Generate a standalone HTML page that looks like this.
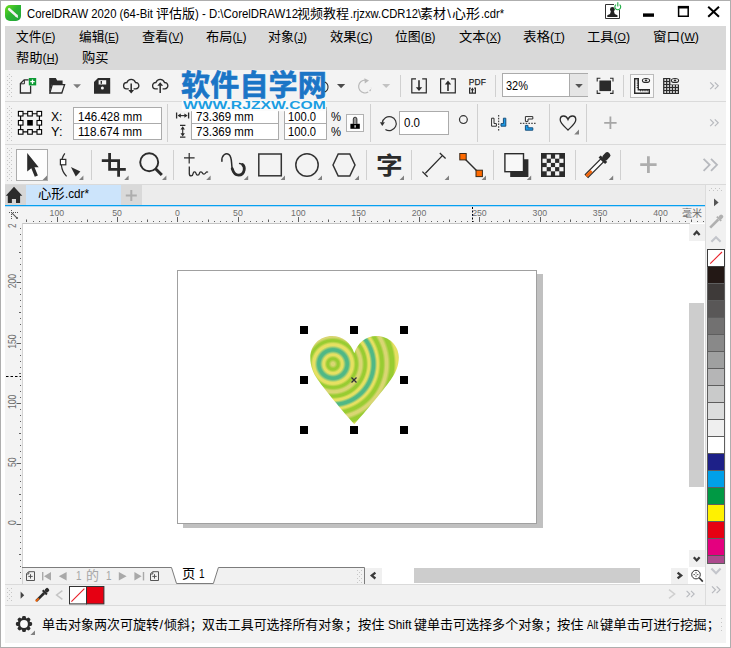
<!DOCTYPE html>
<html lang="zh-CN">
<head>
<meta charset="utf-8">
<title>CorelDRAW 2020</title>
<style>
html,body{margin:0;padding:0;}
body{width:731px;height:648px;overflow:hidden;background:#fff;position:relative;
 font-family:"Liberation Sans","Noto Sans CJK SC",sans-serif;font-size:12px;color:#000;}
.a{position:absolute;}
.t{position:absolute;white-space:pre;line-height:1;}
#win{left:0;top:0;width:729px;height:646px;border:1px solid #aeaeae;background:#fff;}
#menu{left:5px;top:26px;width:721px;height:44px;background:#d9d9d9;}
.mi{position:absolute;white-space:nowrap;font-size:13px;line-height:16px;height:16px;}
.mi u{text-decoration:underline;text-underline-offset:1px;}
.bar{left:5px;width:721px;background:#f3f3f3;}
.sep{position:absolute;width:1px;background:#d0d0d0;}
.inp{position:absolute;background:#fff;border:1px solid #ababab;box-sizing:border-box;}
.pt{position:absolute;white-space:nowrap;font-size:12.5px;line-height:14px;letter-spacing:-0.3px;}
#icons{left:0;top:0;width:731px;height:648px;pointer-events:none;}
.rl{font-size:9px;fill:#6e6e6e;font-family:"Liberation Sans",sans-serif;}
</style>
</head>
<body>
<div class="a" id="win"></div>

<div class="a" id="menu"></div>
<!-- standard toolbar -->
<div class="a bar" style="top:70px;height:31px;"></div>
<div class="a" style="left:5px;top:101px;width:721px;height:1px;background:#dadada;"></div>
<!-- property bar -->
<div class="a bar" style="top:102px;height:42px;"></div>
<div class="a" style="left:5px;top:144px;width:721px;height:1px;background:#dadada;"></div>
<!-- toolbox -->
<div class="a bar" style="top:145px;height:39px;"></div>
<div class="a" style="left:5px;top:184px;width:721px;height:1px;background:#dadada;"></div>
<!-- tab row -->
<div class="a" style="left:5px;top:185px;width:700px;height:20px;background:#ececec;"></div>
<div class="a" style="left:5px;top:185px;width:21px;height:20px;background:#d6d6d6;"></div>
<div class="a" style="left:26px;top:185px;width:95px;height:20px;background:#cce4fb;"></div>
<div class="a" style="left:121px;top:185px;width:21px;height:20px;background:#d9d9d9;"></div>
<div class="a" style="left:5px;top:205px;width:700px;height:2px;background:linear-gradient(#06a0f0 0,#06a0f0 1px,#b4dbf4 1px,#b4dbf4 2px);"></div>


<!-- palette panel -->
<div class="a" style="left:705px;top:185px;width:21px;height:420px;background:#f1f1f1;"></div>
<div class="a" style="left:705px;top:185px;width:1px;height:420px;background:#dcdcdc;"></div>
<!-- rulers -->
<div class="a" style="left:5px;top:207px;width:700px;height:16px;background:#f3f3f3;"></div>
<div class="a" style="left:5px;top:223px;width:17px;height:345px;background:#f3f3f3;"></div>
<!-- canvas -->
<div class="a" style="left:22px;top:223px;width:668px;height:345px;background:#fff;border-left:1px solid #d4d4d4;border-top:1px solid #c4c4c4;box-sizing:border-box;"></div>
<!-- page shadow + page -->
<div class="a" style="left:537px;top:274px;width:6px;height:254px;background:#c0c0c0;"></div>
<div class="a" style="left:183px;top:524px;width:360px;height:4px;background:#c0c0c0;"></div>
<div class="a" style="left:177px;top:270px;width:360px;height:254px;background:#fff;border:1px solid #a0a0a0;box-sizing:border-box;"></div>
<!-- v scrollbar -->
<div class="a" style="left:689px;top:224px;width:16px;height:344px;background:#fff;"></div>
<div class="a" style="left:689px;top:224px;width:16px;height:17px;background:#f0f0f0;"></div>
<div class="a" style="left:689px;top:550px;width:16px;height:17px;background:#f0f0f0;"></div>
<div class="a" style="left:689px;top:303px;width:15px;height:183.6px;background:#cdcdcd;"></div>
<!-- page nav row -->
<div class="a" style="left:5px;top:568px;width:700px;height:16px;background:#f1f1f1;"></div>
<div class="a" style="left:5px;top:568px;width:17px;height:16px;background:#f3f3f3;"></div>
<div class="a" style="left:22px;top:568px;width:1px;height:16px;background:#d2d2d2;"></div>

<div class="a" style="left:365px;top:568px;width:325px;height:16px;background:#fff;"></div>
<div class="a" style="left:365px;top:568px;width:17px;height:16px;background:#f0f0f0;"></div>
<div class="a" style="left:671px;top:568px;width:17px;height:16px;background:#f0f0f0;"></div>
<div class="a" style="left:414.3px;top:568.2px;width:225.5px;height:14.4px;background:#cdcdcd;"></div>
<div class="a" style="left:688px;top:568px;width:17px;height:16px;background:#fff;"></div>
<div class="a" style="left:5px;top:584px;width:700px;height:1px;background:#dadada;"></div>
<!-- color row -->
<div class="a" style="left:5px;top:585px;width:700px;height:20px;background:#f1f1f1;"></div>
<div class="a" style="left:5px;top:605px;width:721px;height:1px;background:#dadada;"></div>
<!-- status bar -->
<div class="a" style="left:5px;top:606px;width:721px;height:37px;background:#f3f3f3;"></div>

<!-- separators -->
<div class="sep" style="left:400px;top:75px;height:22px;"></div>
<div class="sep" style="left:495px;top:75px;height:22px;"></div>
<div class="sep" style="left:623px;top:75px;height:22px;"></div>
<div class="sep" style="left:167px;top:104px;height:38px;"></div>
<div class="sep" style="left:370px;top:104px;height:38px;"></div>
<div class="sep" style="left:477px;top:104px;height:38px;"></div>
<div class="sep" style="left:549px;top:104px;height:38px;"></div>
<div class="sep" style="left:586px;top:104px;height:38px;"></div>
<div class="sep" style="left:91px;top:150px;height:30px;"></div>
<div class="sep" style="left:173px;top:150px;height:30px;"></div>
<div class="sep" style="left:366px;top:150px;height:30px;"></div>
<div class="sep" style="left:411px;top:150px;height:30px;"></div>
<div class="sep" style="left:493px;top:150px;height:30px;"></div>
<div class="sep" style="left:575px;top:150px;height:30px;"></div>
<div class="sep" style="left:620px;top:150px;height:30px;"></div>
<!-- inputs -->
<div class="inp" style="left:502px;top:73px;width:86px;height:24px;"></div>
<div class="a" style="left:569px;top:74px;width:18px;height:22px;background:#e5e5e5;border-left:1px solid #ababab;"></div>
<div class="inp" style="left:73px;top:107px;width:89px;height:17px;"></div>
<div class="inp" style="left:73px;top:123px;width:89px;height:17px;"></div>
<div class="inp" style="left:191px;top:107px;width:88px;height:17px;"></div>
<div class="inp" style="left:191px;top:123px;width:88px;height:17px;"></div>
<div class="inp" style="left:284px;top:107px;width:43px;height:17px;"></div>
<div class="inp" style="left:284px;top:123px;width:43px;height:17px;"></div>
<div class="inp" style="left:399px;top:111px;width:50px;height:24px;"></div>
<!-- palette -->
<div class="a" style="left:707px;top:266px;width:18px;height:17px;background:#231815;border:1px solid #5e5e5e;border-bottom:none;box-sizing:border-box;"></div>
<div class="a" style="left:707px;top:283px;width:18px;height:17px;background:#3e3a39;border:1px solid #5e5e5e;border-bottom:none;box-sizing:border-box;"></div>
<div class="a" style="left:707px;top:300px;width:18px;height:17px;background:#595757;border:1px solid #5e5e5e;border-bottom:none;box-sizing:border-box;"></div>
<div class="a" style="left:707px;top:317px;width:18px;height:17px;background:#727171;border:1px solid #5e5e5e;border-bottom:none;box-sizing:border-box;"></div>
<div class="a" style="left:707px;top:334px;width:18px;height:17px;background:#898989;border:1px solid #5e5e5e;border-bottom:none;box-sizing:border-box;"></div>
<div class="a" style="left:707px;top:351px;width:18px;height:17px;background:#9fa0a0;border:1px solid #5e5e5e;border-bottom:none;box-sizing:border-box;"></div>
<div class="a" style="left:707px;top:368px;width:18px;height:17px;background:#b5b5b6;border:1px solid #5e5e5e;border-bottom:none;box-sizing:border-box;"></div>
<div class="a" style="left:707px;top:385px;width:18px;height:17px;background:#c9caca;border:1px solid #5e5e5e;border-bottom:none;box-sizing:border-box;"></div>
<div class="a" style="left:707px;top:402px;width:18px;height:17px;background:#dcdddd;border:1px solid #5e5e5e;border-bottom:none;box-sizing:border-box;"></div>
<div class="a" style="left:707px;top:419px;width:18px;height:17px;background:#efefef;border:1px solid #5e5e5e;border-bottom:none;box-sizing:border-box;"></div>
<div class="a" style="left:707px;top:436px;width:18px;height:17px;background:#ffffff;border:1px solid #5e5e5e;border-bottom:none;box-sizing:border-box;"></div>
<div class="a" style="left:707px;top:453px;width:18px;height:17px;background:#1d2088;border:1px solid #5e5e5e;border-bottom:none;box-sizing:border-box;"></div>
<div class="a" style="left:707px;top:470px;width:18px;height:17px;background:#00a0e9;border:1px solid #5e5e5e;border-bottom:none;box-sizing:border-box;"></div>
<div class="a" style="left:707px;top:487px;width:18px;height:17px;background:#009944;border:1px solid #5e5e5e;border-bottom:none;box-sizing:border-box;"></div>
<div class="a" style="left:707px;top:504px;width:18px;height:17px;background:#fff100;border:1px solid #5e5e5e;border-bottom:none;box-sizing:border-box;"></div>
<div class="a" style="left:707px;top:521px;width:18px;height:17px;background:#e60012;border:1px solid #5e5e5e;border-bottom:none;box-sizing:border-box;"></div>
<div class="a" style="left:707px;top:538px;width:18px;height:17px;background:#e4007f;border:1px solid #5e5e5e;border-bottom:none;box-sizing:border-box;"></div>
<div class="a" style="left:707px;top:555px;width:18px;height:9px;background:#ad4a8e;border:1px solid #5e5e5e;border-top:1px solid #555;box-sizing:border-box;"></div>
<div class="a" style="left:707px;top:249px;width:18px;height:18px;background:#fff;border:1px solid #3c3c3c;box-sizing:border-box;"></div>
<!-- tool text glyph -->
<div class="t" style="left:375.7px;top:151.6px;font-size:25px;font-weight:700;color:#2b2b2b;font-family:'Noto Sans CJK SC',sans-serif;transform:scale(1.07,0.945);transform-origin:0 0;">字</div>
<div class="t" style="left:468.8px;top:78.3px;font-size:8.4px;color:#1e1e1e;letter-spacing:0.15px;-webkit-text-stroke:0.25px #1e1e1e;">PDF</div>
<div class="t" style="left:682px;top:207.5px;font-size:10px;color:#6e6e6e;font-family:'Noto Sans CJK SC',sans-serif;">毫米</div>
<!-- watermark -->
<div class="a" style="left:181.5px;top:100.5px;width:144px;height:10px;background:#fbfbfb;box-shadow:0 0 1px #fbfbfb;"></div>
<div class="t" id="wm1" style="left:181px;top:69px;font-size:29px;letter-spacing:0.2px;font-weight:700;color:#1b75c6;-webkit-text-stroke:0.7px #1b75c6;font-family:'Noto Sans CJK SC',sans-serif;text-shadow:0 0 1px #fff,0 0 1px #fff,0 0 2px #fff;">软件自学网</div>
<!--MORE-->
<svg class="a" id="icons" width="731" height="648" viewBox="0 0 731 648">
<defs>
<linearGradient id="gApp" x1="0" y1="0" x2="1" y2="1"><stop offset="0" stop-color="#6ee01c"/><stop offset="0.45" stop-color="#2db52f"/><stop offset="1" stop-color="#1fa33c"/></linearGradient>
<radialGradient id="gHeart" gradientUnits="userSpaceOnUse" cx="333" cy="364" r="81">
<stop offset="0" stop-color="#d9d673"/>
<stop offset="0.02" stop-color="#d9d673"/>
<stop offset="0.055" stop-color="#98cc32"/>
<stop offset="0.075" stop-color="#98cc32"/>
<stop offset="0.105" stop-color="#e6e062"/>
<stop offset="0.125" stop-color="#e6e062"/>
<stop offset="0.16" stop-color="#4fb886"/>
<stop offset="0.19" stop-color="#4fb886"/>
<stop offset="0.225" stop-color="#e6e062"/>
<stop offset="0.25" stop-color="#e6e062"/>
<stop offset="0.28" stop-color="#98cc32"/>
<stop offset="0.30" stop-color="#98cc32"/>
<stop offset="0.33" stop-color="#d9d673"/>
<stop offset="0.355" stop-color="#d9d673"/>
<stop offset="0.385" stop-color="#98cc32"/>
<stop offset="0.41" stop-color="#98cc32"/>
<stop offset="0.435" stop-color="#e6e062"/>
<stop offset="0.455" stop-color="#e6e062"/>
<stop offset="0.485" stop-color="#4fb886"/>
<stop offset="0.515" stop-color="#4fb886"/>
<stop offset="0.545" stop-color="#e6e062"/>
<stop offset="0.56" stop-color="#e6e062"/>
<stop offset="0.59" stop-color="#98cc32"/>
<stop offset="0.62" stop-color="#98cc32"/>
<stop offset="0.65" stop-color="#d9d673"/>
<stop offset="0.675" stop-color="#d9d673"/>
<stop offset="0.71" stop-color="#98cc32"/>
<stop offset="0.75" stop-color="#98cc32"/>
<stop offset="0.78" stop-color="#e6e062"/>
<stop offset="0.81" stop-color="#e6e062"/>
<stop offset="0.85" stop-color="#4fb886"/>
<stop offset="0.9" stop-color="#4fb886"/>
<stop offset="1" stop-color="#e6e062"/>
</radialGradient>
</defs>

<!-- app icon -->
<path d="M10,5 H21 V16 A5,5 0 0 1 16,21 H10 A5,5 0 0 1 5,16 V10 A5,5 0 0 1 10,5 Z" fill="url(#gApp)"/>
<path d="M9.2,9.2 L16.4,15.6" stroke="#f2f2f2" stroke-width="2.6" stroke-linecap="round" fill="none"/>
<path d="M15.2,16.8 L18.2,17.9 L17.4,14.6 Z" fill="#f2f2f2"/>

<!-- user icon -->
<path d="M614,4.5 H605.5 V18.5 H619.5 V10" fill="none" stroke="#333" stroke-width="1"/>
<circle cx="612.4" cy="9.4" r="2.4" fill="#222"/>
<path d="M611,11 h2.8 l1,3 l2.7,1.2 v1.8 h-10.2 v-1.8 l2.7,-1.2 z" fill="#222"/>
<path d="M616,4.6 A2.9,2.9 0 1 0 619.6,4.6" fill="none" stroke="#1fae45" stroke-width="1.1"/>
<path d="M617.8,2.2 V6.6" stroke="#1fae45" stroke-width="1.1"/>
<!-- min max close -->
<rect x="643" y="13.4" width="11" height="3.4" fill="#000"/>
<path d="M678.6,7 H688.2 V16.3 H678.6 Z" fill="none" stroke="#000" stroke-width="1.5"/>
<rect x="677.9" y="5.9" width="11" height="2.6" fill="#000"/>
<path d="M708.2,6.8 L719,16.8 M719,6.8 L708.2,16.8" stroke="#000" stroke-width="2" fill="none"/>

<!-- HEART -->
<path id="heart" d="M354.3,353.2 C351,343 343,336 332,336 C319.5,336 310.3,345.5 310.3,357.5 C310.3,366 313,373 318,380 C322.5,386.5 338,405.8 354.3,424.3 C370.6,405.8 386.1,386.5 390.6,380 C395.6,373 398.8,366 398.8,357.5 C398.8,345.5 389,336 376.6,336 C365.6,336 357.6,343 354.3,353.2 Z" fill="url(#gHeart)"/>
<g fill="#000">
<rect x="300" y="326" width="8" height="8"/><rect x="350" y="326" width="8" height="8"/><rect x="400" y="326" width="8" height="8"/>
<rect x="300" y="376" width="8" height="8"/><rect x="400" y="376" width="8" height="8"/>
<rect x="300" y="426" width="8" height="8"/><rect x="350" y="426" width="8" height="8"/><rect x="400" y="426" width="8" height="8"/>
</g>
<path d="M351.5,377.5 L356.5,382.5 M356.5,377.5 L351.5,382.5" stroke="#2e2e38" stroke-width="1.3"/>
<clipPath id="rc2"><rect x="5" y="224" width="17" height="360"/></clipPath>
<clipPath id="rc"><rect x="5" y="206" width="700" height="17"/><rect x="5" y="224" width="17" height="360"/></clipPath>
<pattern id="grip" x="7" y="0" width="4" height="4" patternUnits="userSpaceOnUse"><rect x="0" y="0" width="1" height="1" fill="#c6c6c6"/><rect x="2" y="2" width="1" height="1" fill="#c6c6c6"/></pattern>
<!-- grippers -->
<rect x="7" y="73" width="5" height="25" fill="url(#grip)"/>
<rect x="7" y="105" width="5" height="37" fill="url(#grip)"/>
<rect x="7" y="148" width="5" height="33" fill="url(#grip)"/>
<rect x="7" y="587" width="5" height="14" fill="url(#grip)"/>
<rect x="357" y="570" width="6" height="13" fill="url(#grip)"/>
<rect x="708" y="187" width="15" height="5" fill="url(#grip)"/>
<rect x="720" y="616" width="3" height="18" fill="url(#grip)"/>

<!-- ===== standard toolbar ===== -->
<g fill="none" stroke="#2b2b2b" stroke-width="1.3">
<!-- new -->
<path d="M28.6,79.8 H24.2 L20.4,83.6 V93 H30.6 V85.8"/>
<path d="M24.4,80 V83.8 H20.6" stroke-width="1"/>
</g>
<rect x="28.8" y="78" width="7.4" height="7.4" fill="#0c9a33"/>
<path d="M32.5,79.5 V83.9 M30.3,81.7 H34.7" stroke="#fff" stroke-width="1.3"/>
<!-- open -->
<path d="M49.2,78 H55.8 L57.2,80.4 H62.6 V84.2 H52 L49.2,93.4 Z" fill="#2b2b2b"/>
<path d="M52.3,84.6 H64.6 L61.8,93 H49.8 Z" fill="#f3f3f3" stroke="#2b2b2b" stroke-width="1.3"/>
<path d="M73.2,84.3 H81 L77.1,88.3 Z" fill="#7c7c7c"/>
<!-- save -->
<path d="M98,78 H110.2 V93.8 H94 V82 Z" fill="#2b2b2b"/>
<rect x="98.6" y="80.2" width="7.6" height="4.3" fill="#f4f4f4"/>
<rect x="100.6" y="81" width="1.4" height="2.8" fill="#2b2b2b"/>
<circle cx="102.4" cy="88" r="1.5" fill="#f4f4f4"/>
<!-- cloud down -->
<g fill="none" stroke="#2b2b2b" stroke-width="1.3">
<path d="M128.8,88.8 H126.6 A3.15,3.15 0 0 1 126.9,82.5 A4.55,4.55 0 0 1 135.5,82.5 A3.15,3.15 0 0 1 135.9,88.8 H133.6"/>
<path d="M157.8,88.8 H155.6 A3.15,3.15 0 0 1 155.9,82.5 A4.55,4.55 0 0 1 164.5,82.5 A3.15,3.15 0 0 1 164.9,88.8 H162.6"/>
</g>
<path d="M131.2,83.6 V90.6" stroke="#2b2b2b" stroke-width="1.5"/>
<path d="M128.3,90 H134.1 L131.2,93.4 Z" fill="#2b2b2b"/>
<path d="M160.2,85.2 V93" stroke="#2b2b2b" stroke-width="1.5"/>
<path d="M157.3,85.8 H163.1 L160.2,82.2 Z" fill="#2b2b2b"/>
<!-- undo arc piece & arrows -->
<path d="M324.8,82 A5.5,5.5 0 0 1 324.8,92" fill="none" stroke="#2b2b2b" stroke-width="1.1"/>
<path d="M337,84 H345.2 L341.1,88.2 Z" fill="#4a4a4a"/>
<path d="M365.6,80.2 A6.4,6.4 0 1 0 371.3,87.8" fill="none" stroke="#b9b9b9" stroke-width="1.2" stroke-dasharray="23.5 1.6 1.8 1.6 1.8 20"/>
<path d="M364.4,78.2 L369,80.6 L364.8,83.6 Z" fill="#b9b9b9"/>
<path d="M382.2,84 H390.2 L386.2,88 Z" fill="#c2c2c2"/>
<!-- import / export -->
<g fill="none" stroke="#2b2b2b" stroke-width="1.2">
<path d="M416,78.9 H411.8 V92.8 H426.3 V78.9 H422.2"/>
<path d="M444.8,78.9 H440.6 V92.8 H455.3 V78.9 H451"/>
</g>
<path d="M419,80.2 V88.6" stroke="#2b2b2b" stroke-width="1.6"/>
<path d="M415.8,87.2 H422.2 L419,91 Z" fill="#2b2b2b"/>
<path d="M448,84 V91" stroke="#2b2b2b" stroke-width="1.6"/>
<path d="M444.8,84.6 H451.2 L448,80.4 Z" fill="#2b2b2b"/>
<!-- pdf small icon -->
<path d="M470.8,88.2 H469.6 V93.1 H475.4 V88.2 H474.2" fill="none" stroke="#2b2b2b" stroke-width="1.2"/>
<path d="M472.4,93 V89.6" stroke="#2b2b2b" stroke-width="1.2"/>
<path d="M470.6,90.2 H474.2 L472.4,87.6 Z" fill="#2b2b2b"/>
<!-- combo arrow -->
<path d="M575.2,84 H582.8 L579,88 Z" fill="#555"/>
<!-- fullscreen -->
<rect x="599.4" y="80.5" width="11.6" height="10.6" fill="#2b2b2b"/>
<path d="M597.2,81.4 V78.2 H600.4 M610,78.2 H613 V81.4 M613,90.2 V93.4 H610 M600.4,93.4 H597.2 V90.2" fill="none" stroke="#2b2b2b" stroke-width="1.1"/>
<!-- ruler btn -->
<rect x="630.5" y="74.5" width="23" height="23" fill="#f9f9f9" stroke="#bcbcbc" stroke-width="1"/>
<path d="M634.7,78.7 H638.3 V89.7 H649.3 V93.3 H634.7 Z" fill="#fdfdfd" stroke="#2b2b2b" stroke-width="1.4"/>
<path d="M636.7,80.9 H638 M636.7,83.1 H638 M636.7,85.3 H638 M636.7,87.5 H638 M640.6,90 V91.4 M642.8,90 V91.4 M645,90 V91.4 M647.2,90 V91.4" stroke="#2b2b2b" stroke-width="0.9"/>
<ellipse cx="646" cy="80.5" rx="3.6" ry="2" fill="none" stroke="#2b2b2b" stroke-width="1.1"/>
<ellipse cx="646" cy="80.5" rx="1.3" ry="1" fill="#2b2b2b"/>
<!-- grid icon -->
<path d="M663.1,78 H670.4 V84.4 H679 V94 H663.1 Z" fill="#2b2b2b"/>
<g fill="#f6f6f6"><rect x="664.35" y="79.15" width="1.7" height="1.7"/><rect x="667.25" y="79.15" width="1.7" height="1.7"/><rect x="664.35" y="82.15" width="1.7" height="1.7"/><rect x="667.25" y="82.15" width="1.7" height="1.7"/><rect x="664.35" y="85.15" width="1.7" height="1.7"/><rect x="667.25" y="85.15" width="1.7" height="1.7"/><rect x="670.15" y="85.15" width="1.7" height="1.7"/><rect x="673.10" y="85.15" width="1.7" height="1.7"/><rect x="676.05" y="85.15" width="1.7" height="1.7"/><rect x="664.35" y="88.15" width="1.7" height="1.7"/><rect x="667.25" y="88.15" width="1.7" height="1.7"/><rect x="670.15" y="88.15" width="1.7" height="1.7"/><rect x="673.10" y="88.15" width="1.7" height="1.7"/><rect x="676.05" y="88.15" width="1.7" height="1.7"/><rect x="664.35" y="91.15" width="1.7" height="1.7"/><rect x="667.25" y="91.15" width="1.7" height="1.7"/><rect x="670.15" y="91.15" width="1.7" height="1.7"/><rect x="673.10" y="91.15" width="1.7" height="1.7"/><rect x="676.05" y="91.15" width="1.7" height="1.7"/></g>
<ellipse cx="675" cy="80.5" rx="3.6" ry="2" fill="#f2f2f2" stroke="#2b2b2b" stroke-width="1.1"/>
<ellipse cx="675" cy="80.5" rx="1.3" ry="1" fill="#2b2b2b"/>
<!-- chevrons >> -->
<g fill="none" stroke="#b7b9be" stroke-width="1.2">
<path d="M710.2,82.4 L713.6,85.8 L710.2,89.2 M714.8,82.4 L718.2,85.8 L714.8,89.2"/>
<path d="M710.2,119.4 L713.6,122.8 L710.2,126.2 M714.8,119.4 L718.2,122.8 L714.8,126.2"/>
</g>
<path d="M703.6,158.8 L709.6,164.8 L703.6,170.8 M711,158.8 L717,164.8 L711,170.8" fill="none" stroke="#b7b9be" stroke-width="1.8"/>

<!-- ===== property bar ===== -->
<!-- origin icon -->
<path d="M20.6,113.7 H39.4 V131.9 H20.6 Z" fill="none" stroke="#000" stroke-width="1.1"/>
<g fill="#fff" stroke="#000" stroke-width="1.1">
<rect x="18.4" y="111.4" width="4.6" height="4.6"/><rect x="27.7" y="111.4" width="4.6" height="4.6"/><rect x="37" y="111.4" width="4.6" height="4.6"/>
<rect x="18.4" y="120.5" width="4.6" height="4.6"/><rect x="37" y="120.5" width="4.6" height="4.6"/>
<rect x="18.4" y="129.6" width="4.6" height="4.6"/><rect x="27.7" y="129.6" width="4.6" height="4.6"/><rect x="37" y="129.6" width="4.6" height="4.6"/>
</g>
<rect x="27.2" y="120" width="5.6" height="5.6" fill="#000"/>
<!-- width/height icons -->
<path d="M176.6,112.6 V118.6 M188.6,112.6 V118.6" stroke="#2b2b2b" stroke-width="1.3"/>
<path d="M178.6,115.6 H186.6" stroke="#2b2b2b" stroke-width="1.1"/>
<path d="M177.6,115.6 L180.8,113.4 V117.8 Z M187.6,115.6 L184.4,113.4 V117.8 Z" fill="#2b2b2b"/>
<path d="M180,125.4 H185.4 M180,137.2 H185.4" stroke="#2b2b2b" stroke-width="1.3"/>
<path d="M182.7,127.6 V135" stroke="#2b2b2b" stroke-width="1.1"/>
<path d="M182.7,126.2 L180.5,129.4 H184.9 Z M182.7,136.4 L180.5,133.2 H184.9 Z" fill="#2b2b2b"/>
<!-- lock -->
<rect x="346.5" y="114.5" width="17" height="17" fill="#fdfdfd" stroke="#b2b2b2"/>
<rect x="350.4" y="123.8" width="9.4" height="5" fill="#000"/>
<path d="M353.3,124 V119 A1.8,1.8 0 0 1 356.9,119 V124" fill="#9a9a9a" stroke="#222" stroke-width="0.9"/>
<rect x="354.5" y="125.2" width="1.2" height="2.4" fill="#fff"/>
<!-- rotate -->
<path d="M382.3,122.6 A7,7 0 1 1 385.4,129.5" fill="none" stroke="#333" stroke-width="1.2"/>
<path d="M379.9,122.2 L384.9,122.2 L382.3,126 Z" fill="#333"/>
<circle cx="463.4" cy="119.6" r="3.9" fill="none" stroke="#333" stroke-width="1.2"/>
<!-- mirror h -->
<path d="M491.6,118.2 H494 V123.6 H496.4 V126.2 H491.6 Z" fill="#fff" stroke="#2b2b2b" stroke-width="1"/>
<path d="M505.8,118.2 H503.4 V123.6 H501 V126.2 H505.8 Z" fill="#1c9be8" stroke="#1a4f7a" stroke-width="1"/>
<path d="M498.7,115 V131" stroke="#222" stroke-width="1" stroke-dasharray="1.6 1.2"/>
<!-- mirror v -->
<path d="M525.4,116.6 H532.8 V119 H528 V121.4 H525.4 Z" fill="#fff" stroke="#2b2b2b" stroke-width="1"/>
<path d="M525.4,130.2 H532.8 V127.8 H528 V125.4 H525.4 Z" fill="#1c9be8" stroke="#1a4f7a" stroke-width="1"/>
<path d="M520,123.3 H536" stroke="#222" stroke-width="1" stroke-dasharray="1.6 1.2"/>
<!-- heart btn -->
<path d="M568,119.4 C567,116.8 565.2,116 563.6,116 C561.4,116 560.2,117.8 560.2,119.8 C560.2,123.4 564.4,126.4 568,130 C571.6,126.4 575.8,123.4 575.8,119.8 C575.8,117.8 574.6,116 572.4,116 C570.8,116 569,116.8 568,119.4 Z" fill="none" stroke="#2b2b2b" stroke-width="1.3"/>
<path d="M579,129.6 V134.4 H574.2 Z" fill="#808080"/>
<path d="M604.2,122.8 H616.6 M610.4,116.6 V129" stroke="#a6a6a6" stroke-width="1.8"/>

<!-- ===== toolbox ===== -->
<rect x="16.5" y="149.5" width="31" height="31" fill="#fdfdfd" stroke="#ababab"/>
<path d="M27.2,153 V171.6 L31.3,168.3 L34.8,176.8 L37.9,175.5 L34.5,167.2 H38.7 Z" fill="#2b2b2b"/>
<g fill="#808080">
<path d="M47,175.6 V180 H42.6 Z"/><path d="M83.4,175.6 V180 H79 Z"/><path d="M128.6,175.6 V180 H124.2 Z"/><path d="M166.4,175.6 V180 H162 Z"/>
<path d="M210.6,175.6 V180 H206.2 Z"/><path d="M248.2,175.6 V180 H243.8 Z"/><path d="M285,175.6 V180 H280.6 Z"/><path d="M322,175.6 V180 H317.6 Z"/>
<path d="M359,175.6 V180 H354.6 Z"/><path d="M404,175.6 V180 H399.6 Z"/><path d="M449,175.6 V180 H444.6 Z"/><path d="M486,175.6 V180 H481.6 Z"/>
<path d="M531.2,175.6 V180 H526.8 Z"/><path d="M613.2,175.6 V180 H608.8 Z"/>
<path d="M35,630.4 V635 H30.4 Z"/>
</g>
<!-- shape tool -->
<path d="M64.8,153.4 C59.4,161 60.6,170 66.6,176.4" fill="none" stroke="#2b2b2b" stroke-width="1.2"/>
<rect x="60.4" y="159.4" width="5.4" height="5.4" fill="#fff" stroke="#2b2b2b" stroke-width="1.2"/>
<path d="M70.9,166.9 L80.4,171.5 L75.8,176.4 Z" fill="#2b2b2b"/>
<!-- crop -->
<path d="M109.6,153 V169.4 H125.8 M101.8,160.6 H118.6 V176.8" fill="none" stroke="#2b2b2b" stroke-width="2.8"/>
<path d="M111,163 H117.2 V168" fill="none" stroke="#f1f1f1" stroke-width="0"/>
<!-- zoom -->
<circle cx="149.2" cy="162.3" r="9" fill="none" stroke="#2b2b2b" stroke-width="1.9"/>
<path d="M155.6,168.8 L161.8,175" stroke="#2b2b2b" stroke-width="3"/>
<!-- freehand -->
<path d="M184,157.9 H194.6 M189.2,153 V163.4" stroke="#2b2b2b" stroke-width="1.2"/>
<path d="M189.3,166.4 V173.6 C189.5,176.8 192.7,176.4 193.1,173.6 C193.4,171.4 195.6,171.4 196,173.4 C196.5,175.8 199,175.8 199.4,173.4 C199.8,171.4 201.8,171.4 202.4,173 C203,174.6 205,174.2 205.8,172.8 C206.4,171.8 207.2,171.6 208,172.4" fill="none" stroke="#2b2b2b" stroke-width="1.3"/>
<!-- artistic media -->
<path d="M221.9,161.2 C221.4,155 226,152.4 229,154.6 C233,157.6 230.4,166 233.2,171.6 C236,177 243,176.2 244.2,170 C244.8,166.4 243,163.8 239.6,163.4" fill="none" stroke="#2b2b2b" stroke-width="1.5" stroke-linecap="round"/>
<path d="M232.2,168.6 C233.4,172.6 235.4,175.2 238.6,175.2 C241.6,175.2 243.6,173 244.2,170 C244.6,167.8 244,165.8 242.6,164.6" fill="none" stroke="#2b2b2b" stroke-width="2.8" stroke-linecap="round"/>
<!-- rect ellipse polygon -->
<rect x="258.8" y="154" width="22.5" height="21.8" fill="none" stroke="#333" stroke-width="1.5"/>
<circle cx="307" cy="165" r="11.2" fill="none" stroke="#333" stroke-width="1.5"/>
<path d="M333,165 L338.2,154 H349.8 L355,165 L349.8,176 H338.2 Z" fill="none" stroke="#333" stroke-width="1.5"/>
<!-- dimension -->
<path d="M425.4,173.2 L442.4,155.6 M422.4,171.6 L427.6,176.8 M439.8,153 L445.6,158.4" fill="none" stroke="#2b2b2b" stroke-width="1.3"/>
<!-- connector -->
<path d="M463,157 L479,173" stroke="#2b2b2b" stroke-width="1.5"/>
<rect x="459.8" y="153.5" width="6.4" height="6.4" fill="#ff6a00" stroke="#3a2a1a" stroke-width="1"/>
<rect x="476" y="170.2" width="6.4" height="6.4" fill="#ff6a00" stroke="#3a2a1a" stroke-width="1"/>
<!-- drop shadow -->
<path d="M510.2,172 H524 V159.2 H528.4 V177 H510.2 Z" fill="#2b2b2b"/>
<rect x="504.9" y="153.7" width="18.6" height="18" fill="#f8f8f8" stroke="#2b2b2b" stroke-width="1.4"/>
<!-- transparency -->
<rect x="541" y="153" width="24" height="24" fill="#2b2b2b"/>
<g fill="#f4f4f4">
<rect x="546.7" y="154.5" width="4.2" height="4.2"/><rect x="555.1" y="154.5" width="4.2" height="4.2"/>
<rect x="542.5" y="158.7" width="4.2" height="4.2"/><rect x="550.9" y="158.7" width="4.2" height="4.2"/><rect x="559.3" y="158.7" width="4.2" height="4.2"/>
<rect x="546.7" y="162.9" width="4.2" height="4.2"/><rect x="555.1" y="162.9" width="4.2" height="4.2"/>
<rect x="542.5" y="167.1" width="4.2" height="4.2"/><rect x="550.9" y="167.1" width="4.2" height="4.2"/><rect x="559.3" y="167.1" width="4.2" height="4.2"/>
<rect x="546.7" y="171.3" width="4.2" height="4.2"/><rect x="555.1" y="171.3" width="4.2" height="4.2"/>
</g>
<!-- eyedropper big -->
<g transform="translate(598,164.6) rotate(45)">
<rect x="-2" y="-6" width="4" height="22" fill="#fff" stroke="#2b2b2b" stroke-width="1.2"/>
<rect x="-1.4" y="9" width="2.8" height="7.6" fill="#f0640a"/>
<rect x="-4.6" y="-8.4" width="9.2" height="3" fill="#2b2b2b"/>
<rect x="-3" y="-16" width="6" height="8.4" rx="2.4" fill="#2b2b2b"/>
</g>
<path d="M640.2,164.6 H656.6 M648.4,156.2 V173" stroke="#adadad" stroke-width="2.8"/>

<!-- tab row -->
<path d="M14,186.7 L22.3,195.8 H20.1 V203 H16 V199 H11.9 V203 H7.8 V195.8 H5.8 Z" fill="#2b2b2b"/>
<path d="M125.8,195.4 H136.8 M131.3,189.9 V200.9" stroke="#adadad" stroke-width="2"/>
<!-- ruler corner -->
<path d="M9,212.5 H19 M11.5,210 V220" stroke="#555" stroke-width="1" stroke-dasharray="1 1"/>
<path d="M11.8,212.8 L16.8,217.8" stroke="#555" stroke-width="1.1"/>
<circle cx="17" cy="218" r="1.1" fill="#555"/>
<!-- ruler markers -->
<path d="M472.5,207 V222" stroke="#000" stroke-width="1" stroke-dasharray="2 1.5"/>
<path d="M6,376.5 H21" stroke="#000" stroke-width="1" stroke-dasharray="2.5 2"/>

<!-- scrollbar arrows -->
<path d="M693.8,235 L696.7,231.8 L699.6,235" fill="none" stroke="#3a3a3a" stroke-width="2.3"/>
<path d="M693.8,557.2 L696.7,560.4 L699.6,557.2" fill="none" stroke="#3a3a3a" stroke-width="2.3"/>
<path d="M375.4,572.7 L371.8,575.6 L375.4,578.5" fill="none" stroke="#3a3a3a" stroke-width="2.3"/>
<path d="M677.6,572.6 L681.2,575.5 L677.6,578.4" fill="none" stroke="#3a3a3a" stroke-width="2.3"/>
<!-- navigator -->
<circle cx="696" cy="574.6" r="4.3" fill="none" stroke="#333" stroke-width="1"/>
<path d="M699.2,577.8 L702.8,581.6" stroke="#333" stroke-width="1.6"/>
<path d="M696,572 V577.2 M693.4,574.6 H698.6" stroke="#333" stroke-width="0.8" stroke-dasharray="1.6 1.8"/>

<!-- palette panel icons -->
<path d="M710.2,263.6 L722,252" stroke="#e8212a" stroke-width="1.1"/>
<path d="M714,198.6 L718.6,202.4 L714,206.2 Z" fill="#555"/>
<g transform="translate(716.2,221.6) rotate(45)" fill="#b0b0b0">
<rect x="-1.3" y="-3" width="2.6" height="11.5"/>
<rect x="-3" y="-5" width="6" height="2"/>
<rect x="-2" y="-9" width="4" height="4.4" rx="1.6"/>
</g>
<path d="M711.4,241.8 L716,237.2 L720.6,241.8" fill="none" stroke="#c3c5cb" stroke-width="2.1"/>
<path d="M711.4,568.6 L716,573.2 L720.6,568.6" fill="none" stroke="#c3c5cb" stroke-width="2.1"/>
<path d="M712,586.4 L715.4,589.8 L712,593.2 M716.6,586.4 L720,589.8 L716.6,593.2" fill="none" stroke="#b7b9be" stroke-width="1.2"/>

<!-- page nav -->
<g fill="none" stroke="#555" stroke-width="1">
<path d="M28.6,571.7 H34.5 V580.5 H26.5 V573.8 Z M26.7,574 H28.8 V571.9"/>
<path d="M30.5,574.2 V578.6 M28.3,576.4 H32.7"/>
<path d="M152.6,571.7 H158.5 V580.5 H150.5 V573.8 Z M150.7,574 H152.8 V571.9"/>
<path d="M154.5,574.2 V578.6 M152.3,576.4 H156.7"/>
</g>
<g fill="#a9a9a9">
<rect x="42" y="572" width="1.4" height="8.4"/><path d="M51,572 V580.4 L44,576.2 Z"/>
<path d="M66.6,572 V580.4 L58.8,576.2 Z"/>
<path d="M118.8,572 V580.4 L126.6,576.2 Z"/>
<path d="M134.4,572 V580.4 L141.6,576.2 Z"/><rect x="142.8" y="572" width="1.4" height="8.4"/>
</g>
<!-- page tab -->
<path d="M171.5,567.5 L176.5,583.5 H213.4 L218.4,567.5 Z" fill="#fff"/>
<path d="M22,567.5 H171.5 L176.5,583.5 H213.4 L218.4,567.5 H364.5 V584" fill="none" stroke="#7c7c7c" stroke-width="1"/>

<!-- color row -->
<path d="M20.6,591.6 L24.2,595.2 L20.6,598.8 Z" fill="#444"/>
<g transform="translate(42.4,594.8) rotate(45)">
<rect x="-1.3" y="-2.6" width="2.6" height="11.2" fill="#2b2b2b"/>
<rect x="-0.9" y="5" width="1.8" height="4.4" fill="#f0640a"/>
<rect x="-3" y="-4.4" width="6" height="2" fill="#2b2b2b"/>
<rect x="-2" y="-8.6" width="4" height="4.4" rx="1.6" fill="#2b2b2b"/>
</g>
<path d="M62.4,590.6 L56.6,595 L62.4,599.4" fill="none" stroke="#c4c4c4" stroke-width="1.5"/>
<rect x="69.5" y="586.5" width="17" height="17.4" fill="#fff" stroke="#333"/>
<rect x="86.5" y="586.5" width="17.4" height="17.4" fill="#e60012" stroke="#333"/>
<path d="M71.4,601.6 L84.4,588.6" stroke="#e8212a" stroke-width="1.1"/>
<path d="M669,589.6 L674.6,594 L669,598.4" fill="none" stroke="#cfcfcf" stroke-width="1.5"/>
<path d="M686.6,590.8 L689.8,594 L686.6,597.2 M691,590.8 L694.2,594 L691,597.2" fill="none" stroke="#b7b9be" stroke-width="1.1"/>

<!-- gear -->
<g transform="translate(24,624)">
<g fill="#2b2b2b">
<circle r="6.2"/>
<rect x="-1.9" y="-8.1" width="3.8" height="16.2" rx="1.4"/>
<rect x="-1.9" y="-8.1" width="3.8" height="16.2" rx="1.4" transform="rotate(45)"/>
<rect x="-1.9" y="-8.1" width="3.8" height="16.2" rx="1.4" transform="rotate(90)"/>
<rect x="-1.9" y="-8.1" width="3.8" height="16.2" rx="1.4" transform="rotate(135)"/>
</g>
<circle r="3.9" fill="#fafafa"/>
</g>
<g id="rulers">
<path d="M26,219.5v2.5h1v-2.5zM33,221v1h1v-1zM39,221v1h1v-1zM45,221v1h1v-1zM51,221v1h1v-1zM57,217v5h1v-5zM63,221v1h1v-1zM69,221v1h1v-1zM75,221v1h1v-1zM81,221v1h1v-1zM87,219.5v2.5h1v-2.5zM93,221v1h1v-1zM99,221v1h1v-1zM105,221v1h1v-1zM111,221v1h1v-1zM117,217v5h1v-5zM123,221v1h1v-1zM129,221v1h1v-1zM135,221v1h1v-1zM141,221v1h1v-1zM147,219.5v2.5h1v-2.5zM153,221v1h1v-1zM159,221v1h1v-1zM165,221v1h1v-1zM171,221v1h1v-1zM177,217v5h1v-5zM183,221v1h1v-1zM189,221v1h1v-1zM196,221v1h1v-1zM202,221v1h1v-1zM208,219.5v2.5h1v-2.5zM214,221v1h1v-1zM220,221v1h1v-1zM226,221v1h1v-1zM232,221v1h1v-1zM238,217v5h1v-5zM244,221v1h1v-1zM250,221v1h1v-1zM256,221v1h1v-1zM262,221v1h1v-1zM268,219.5v2.5h1v-2.5zM274,221v1h1v-1zM280,221v1h1v-1zM286,221v1h1v-1zM292,221v1h1v-1zM298,217v5h1v-5zM304,221v1h1v-1zM310,221v1h1v-1zM316,221v1h1v-1zM322,221v1h1v-1zM328,219.5v2.5h1v-2.5zM334,221v1h1v-1zM340,221v1h1v-1zM346,221v1h1v-1zM353,221v1h1v-1zM359,217v5h1v-5zM365,221v1h1v-1zM371,221v1h1v-1zM377,221v1h1v-1zM383,221v1h1v-1zM389,219.5v2.5h1v-2.5zM395,221v1h1v-1zM401,221v1h1v-1zM407,221v1h1v-1zM413,221v1h1v-1zM419,217v5h1v-5zM425,221v1h1v-1zM431,221v1h1v-1zM437,221v1h1v-1zM443,221v1h1v-1zM449,219.5v2.5h1v-2.5zM455,221v1h1v-1zM461,221v1h1v-1zM467,221v1h1v-1zM473,221v1h1v-1zM479,217v5h1v-5zM485,221v1h1v-1zM491,221v1h1v-1zM497,221v1h1v-1zM503,221v1h1v-1zM509,219.5v2.5h1v-2.5zM516,221v1h1v-1zM522,221v1h1v-1zM528,221v1h1v-1zM534,221v1h1v-1zM540,217v5h1v-5zM546,221v1h1v-1zM552,221v1h1v-1zM558,221v1h1v-1zM564,221v1h1v-1zM570,219.5v2.5h1v-2.5zM576,221v1h1v-1zM582,221v1h1v-1zM588,221v1h1v-1zM594,221v1h1v-1zM600,217v5h1v-5zM606,221v1h1v-1zM612,221v1h1v-1zM618,221v1h1v-1zM624,221v1h1v-1zM630,219.5v2.5h1v-2.5zM636,221v1h1v-1zM642,221v1h1v-1zM648,221v1h1v-1zM654,221v1h1v-1zM660,217v5h1v-5zM666,221v1h1v-1zM672,221v1h1v-1zM679,221v1h1v-1zM685,221v1h1v-1zM691,219.5v2.5h1v-2.5zM697,221v1h1v-1zM703,221v1h1v-1z" fill="#606060"/>
<text class="rl" transform="translate(56.8,216) scale(0.97,1.08)" text-anchor="middle">100</text>
<text class="rl" transform="translate(117.1,216) scale(0.97,1.08)" text-anchor="middle">50</text>
<text class="rl" transform="translate(177.5,216) scale(0.97,1.08)" text-anchor="middle">0</text>
<text class="rl" transform="translate(237.9,216) scale(0.97,1.08)" text-anchor="middle">50</text>
<text class="rl" transform="translate(298.3,216) scale(0.97,1.08)" text-anchor="middle">100</text>
<text class="rl" transform="translate(358.6,216) scale(0.97,1.08)" text-anchor="middle">150</text>
<text class="rl" transform="translate(419.0,216) scale(0.97,1.08)" text-anchor="middle">200</text>
<text class="rl" transform="translate(479.4,216) scale(0.97,1.08)" text-anchor="middle">250</text>
<text class="rl" transform="translate(539.8,216) scale(0.97,1.08)" text-anchor="middle">300</text>
<text class="rl" transform="translate(600.1,216) scale(0.97,1.08)" text-anchor="middle">350</text>
<text class="rl" transform="translate(660.5,216) scale(0.97,1.08)" text-anchor="middle">400</text>
<g clip-path="url(#rc2)">
<path d="M20,578h1v1h-1zM20,572h1v1h-1zM20,566h1v1h-1zM20,560h1v1h-1zM19,554h2v1h-2zM20,548h1v1h-1zM20,542h1v1h-1zM20,536h1v1h-1zM20,530h1v1h-1zM16.5,524h4.5v1h-4.5zM20,518h1v1h-1zM20,512h1v1h-1zM20,506h1v1h-1zM20,500h1v1h-1zM19,494h2v1h-2zM20,487h1v1h-1zM20,481h1v1h-1zM20,475h1v1h-1zM20,469h1v1h-1zM16.5,463h4.5v1h-4.5zM20,457h1v1h-1zM20,451h1v1h-1zM20,445h1v1h-1zM20,439h1v1h-1zM19,433h2v1h-2zM20,427h1v1h-1zM20,421h1v1h-1zM20,415h1v1h-1zM20,409h1v1h-1zM16.5,403h4.5v1h-4.5zM20,397h1v1h-1zM20,391h1v1h-1zM20,385h1v1h-1zM20,379h1v1h-1zM19,373h2v1h-2zM20,367h1v1h-1zM20,361h1v1h-1zM20,355h1v1h-1zM20,349h1v1h-1zM16.5,343h4.5v1h-4.5zM20,337h1v1h-1zM20,331h1v1h-1zM20,324h1v1h-1zM20,318h1v1h-1zM19,312h2v1h-2zM20,306h1v1h-1zM20,300h1v1h-1zM20,294h1v1h-1zM20,288h1v1h-1zM16.5,282h4.5v1h-4.5zM20,276h1v1h-1zM20,270h1v1h-1zM20,264h1v1h-1zM20,258h1v1h-1zM19,252h2v1h-2zM20,246h1v1h-1zM20,240h1v1h-1zM20,234h1v1h-1zM20,228h1v1h-1z" fill="#606060"/>
<text class="rl" transform="translate(16.3,522.7) rotate(-90) scale(0.95,1.15)" text-anchor="middle">0</text>
<text class="rl" transform="translate(16.3,462.3) rotate(-90) scale(0.95,1.15)" text-anchor="middle">50</text>
<text class="rl" transform="translate(16.3,402.0) rotate(-90) scale(0.95,1.15)" text-anchor="middle">100</text>
<text class="rl" transform="translate(16.3,341.6) rotate(-90) scale(0.95,1.15)" text-anchor="middle">150</text>
<text class="rl" transform="translate(16.3,281.2) rotate(-90) scale(0.95,1.15)" text-anchor="middle">200</text>
<text class="rl" transform="translate(16.3,220.8) rotate(-90) scale(0.95,1.15)" text-anchor="middle">250</text>
</g>
</g>

</svg>

<div class="t" style="left:27px;top:7px;font-size:13px;transform:scaleX(0.8695);transform-origin:0 0;">CorelDRAW 2020 (64-Bit </div>
<div class="t" style="left:155.5px;top:7px;font-size:13px;transform:scaleX(0.9996);transform-origin:0 0;">评估版</div>
<div class="t" style="left:194.5px;top:7px;font-size:13px;transform:scaleX(0.8783);transform-origin:0 0;">) - D:\CorelDRAW12</div>
<div class="t" style="left:297px;top:7px;font-size:13px;transform:scaleX(0.9997);transform-origin:0 0;">视频教程</div>
<div class="t" style="left:349.5px;top:7px;font-size:13px;transform:scaleX(0.8621);transform-origin:0 0;">.rjzxw.CDR12\</div>
<div class="t" style="left:420px;top:7px;font-size:13px;transform:scaleX(0.9994);transform-origin:0 0;">素材</div>
<div class="t" style="left:447.2px;top:7px;font-size:13px;">\</div>
<div class="t" style="left:452px;top:7px;font-size:13px;transform:scaleX(1.0763);transform-origin:0 0;">心形</div>
<div class="t" style="left:480.5px;top:7px;font-size:13px;transform:scaleX(0.8603);transform-origin:0 0;">.cdr*</div>
<div class="t" style="left:16px;top:30px;font-size:13px;transform:scaleX(0.9768);transform-origin:0 0;">文件<span style="font-size:12px">(</span><u style="font-size:10.5px">F</u><span style="font-size:12px">)</span></div>
<div class="t" style="left:79px;top:30px;font-size:13px;transform:scaleX(0.9749);transform-origin:0 0;">编辑<span style="font-size:12px">(</span><u style="font-size:10.5px">E</u><span style="font-size:12px">)</span></div>
<div class="t" style="left:141.5px;top:30px;font-size:13px;transform:scaleX(1.0114);transform-origin:0 0;">查看<span style="font-size:12px">(</span><u style="font-size:10.5px">V</u><span style="font-size:12px">)</span></div>
<div class="t" style="left:205.5px;top:30px;font-size:13px;transform:scaleX(1.0161);transform-origin:0 0;">布局<span style="font-size:12px">(</span><u style="font-size:10.5px">L</u><span style="font-size:12px">)</span></div>
<div class="t" style="left:268px;top:30px;font-size:13px;transform:scaleX(0.9932);transform-origin:0 0;">对象<span style="font-size:12px">(</span><u style="font-size:10.5px">J</u><span style="font-size:12px">)</span></div>
<div class="t" style="left:329.5px;top:30px;font-size:13px;transform:scaleX(1.0214);transform-origin:0 0;">效果<span style="font-size:12px">(</span><u style="font-size:10.5px">C</u><span style="font-size:12px">)</span></div>
<div class="t" style="left:395px;top:30px;font-size:13px;transform:scaleX(0.9871);transform-origin:0 0;">位图<span style="font-size:12px">(</span><u style="font-size:10.5px">B</u><span style="font-size:12px">)</span></div>
<div class="t" style="left:458.5px;top:30px;font-size:13px;transform:scaleX(1.0236);transform-origin:0 0;">文本<span style="font-size:12px">(</span><u style="font-size:10.5px">X</u><span style="font-size:12px">)</span></div>
<div class="t" style="left:522.5px;top:30px;font-size:13px;transform:scaleX(1.0386);transform-origin:0 0;">表格<span style="font-size:12px">(</span><u style="font-size:10.5px">T</u><span style="font-size:12px">)</span></div>
<div class="t" style="left:587px;top:30px;font-size:13px;transform:scaleX(1.0193);transform-origin:0 0;">工具<span style="font-size:12px">(</span><u style="font-size:10.5px">O</u><span style="font-size:12px">)</span></div>
<div class="t" style="left:652.5px;top:30px;font-size:13px;transform:scaleX(1.0469);transform-origin:0 0;">窗口<span style="font-size:12px">(</span><u style="font-size:10.5px">W</u><span style="font-size:12px">)</span></div>
<div class="t" style="left:16px;top:51px;font-size:13px;transform:scaleX(1.0214);transform-origin:0 0;">帮助<span style="font-size:12px">(</span><u style="font-size:10.5px">H</u><span style="font-size:12px">)</span></div>
<div class="t" style="left:82px;top:51px;font-size:13px;transform:scaleX(1.0186);transform-origin:0 0;">购买</div>
<div class="t" style="left:506px;top:79px;font-size:13px;transform:scaleX(0.8451);transform-origin:0 0;">32%</div>
<div class="t" style="left:51px;top:109.5px;font-size:13px;transform:scaleX(0.9352);transform-origin:0 0;">X:</div>
<div class="t" style="left:51px;top:125px;font-size:13px;transform:scaleX(0.9933);transform-origin:0 0;">Y:</div>
<div class="t" style="left:77.5px;top:109.5px;font-size:13px;transform:scaleX(0.8856);transform-origin:0 0;">146.428 mm</div>
<div class="t" style="left:77.5px;top:125px;font-size:13px;transform:scaleX(0.8977);transform-origin:0 0;">118.674 mm</div>
<div class="t" style="left:195.5px;top:109.5px;font-size:13px;transform:scaleX(0.8840);transform-origin:0 0;">73.369 mm</div>
<div class="t" style="left:195.5px;top:125px;font-size:13px;transform:scaleX(0.8840);transform-origin:0 0;">73.369 mm</div>
<div class="t" style="left:288px;top:109.5px;font-size:13px;transform:scaleX(0.8603);transform-origin:0 0;">100.0</div>
<div class="t" style="left:288px;top:125px;font-size:13px;transform:scaleX(0.8603);transform-origin:0 0;">100.0</div>
<div class="t" style="left:330.5px;top:109.5px;font-size:13px;transform:scaleX(0.8649);transform-origin:0 0;">%</div>
<div class="t" style="left:330.5px;top:125px;font-size:13px;transform:scaleX(0.8649);transform-origin:0 0;">%</div>
<div class="t" style="left:404px;top:116px;font-size:13px;transform:scaleX(0.8850);transform-origin:0 0;">0.0</div>
<div class="t" style="left:37.6px;top:187.2px;font-size:13px;transform:scaleX(1.0263);transform-origin:0 0;">心形</div>
<div class="t" style="left:64.8px;top:187.2px;font-size:13px;transform:scaleX(0.8977);transform-origin:0 0;">.cdr*</div>
<div class="t" style="left:75.5px;top:569.2px;font-size:13px;color:#a6a6a6;transform:scaleX(0.7603);transform-origin:0 0;">1</div>
<div class="t" style="left:86px;top:569.2px;font-size:13px;color:#a6a6a6;transform:scaleX(0.9988);transform-origin:0 0;">的</div>
<div class="t" style="left:105.5px;top:569.2px;font-size:13px;color:#a6a6a6;transform:scaleX(0.7603);transform-origin:0 0;">1</div>
<div class="t" style="left:182.4px;top:566.7px;font-size:13px;transform:scaleX(1.0295);transform-origin:0 0;">页</div>
<div class="t" style="left:199px;top:566.7px;font-size:13px;transform:scaleX(0.7741);transform-origin:0 0;">1</div>
<div class="t" style="left:41.5px;top:618px;font-size:13px;transform:scaleX(0.9999);transform-origin:0 0;">单击对象两次可旋转</div>
<div class="t" style="left:159.4px;top:618px;font-size:13px;">/</div>
<div class="t" style="left:164px;top:618px;font-size:13px;transform:scaleX(0.9917);transform-origin:0 0;">倾斜</div>
<div class="t" style="left:190px;top:618px;font-size:13px;transform:scaleX(0.9220);transform-origin:0 0;">；</div>
<div class="t" style="left:201.7px;top:618px;font-size:13px;transform:scaleX(0.9936);transform-origin:0 0;">双击工具可选择所有对象</div>
<div class="t" style="left:344.6px;top:618px;font-size:13px;transform:scaleX(0.9911);transform-origin:0 0;">；</div>
<div class="t" style="left:358px;top:618px;font-size:13px;transform:scaleX(1.0148);transform-origin:0 0;">按住</div>
<div class="t" style="left:388px;top:618px;font-size:13px;transform:scaleX(0.9033);transform-origin:0 0;">Shift</div>
<div class="t" style="left:414.2px;top:618px;font-size:13px;transform:scaleX(1.0014);transform-origin:0 0;">键单击可选择多个对象</div>
<div class="t" style="left:544.8px;top:618px;font-size:13px;transform:scaleX(0.9373);transform-origin:0 0;">；</div>
<div class="t" style="left:556.8px;top:618px;font-size:13px;transform:scaleX(1.0148);transform-origin:0 0;">按住</div>
<div class="t" style="left:586.7px;top:618px;font-size:13px;transform:scaleX(0.7448);transform-origin:0 0;">Alt</div>
<div class="t" style="left:600.4px;top:618px;font-size:13px;transform:scaleX(1.0248);transform-origin:0 0;">键单击可进行挖掘</div>
<div class="t" style="left:707.4px;top:618px;font-size:13px;transform:scaleX(0.9297);transform-origin:0 0;">；</div>
<div class="t" style="left:182.8px;top:100.7px;font-size:10.2px;font-weight:700;color:#1b9ee2;transform:scaleX(1.5386);transform-origin:0 0;">WWW.RJZXW.COM</div>
</body>
</html>
